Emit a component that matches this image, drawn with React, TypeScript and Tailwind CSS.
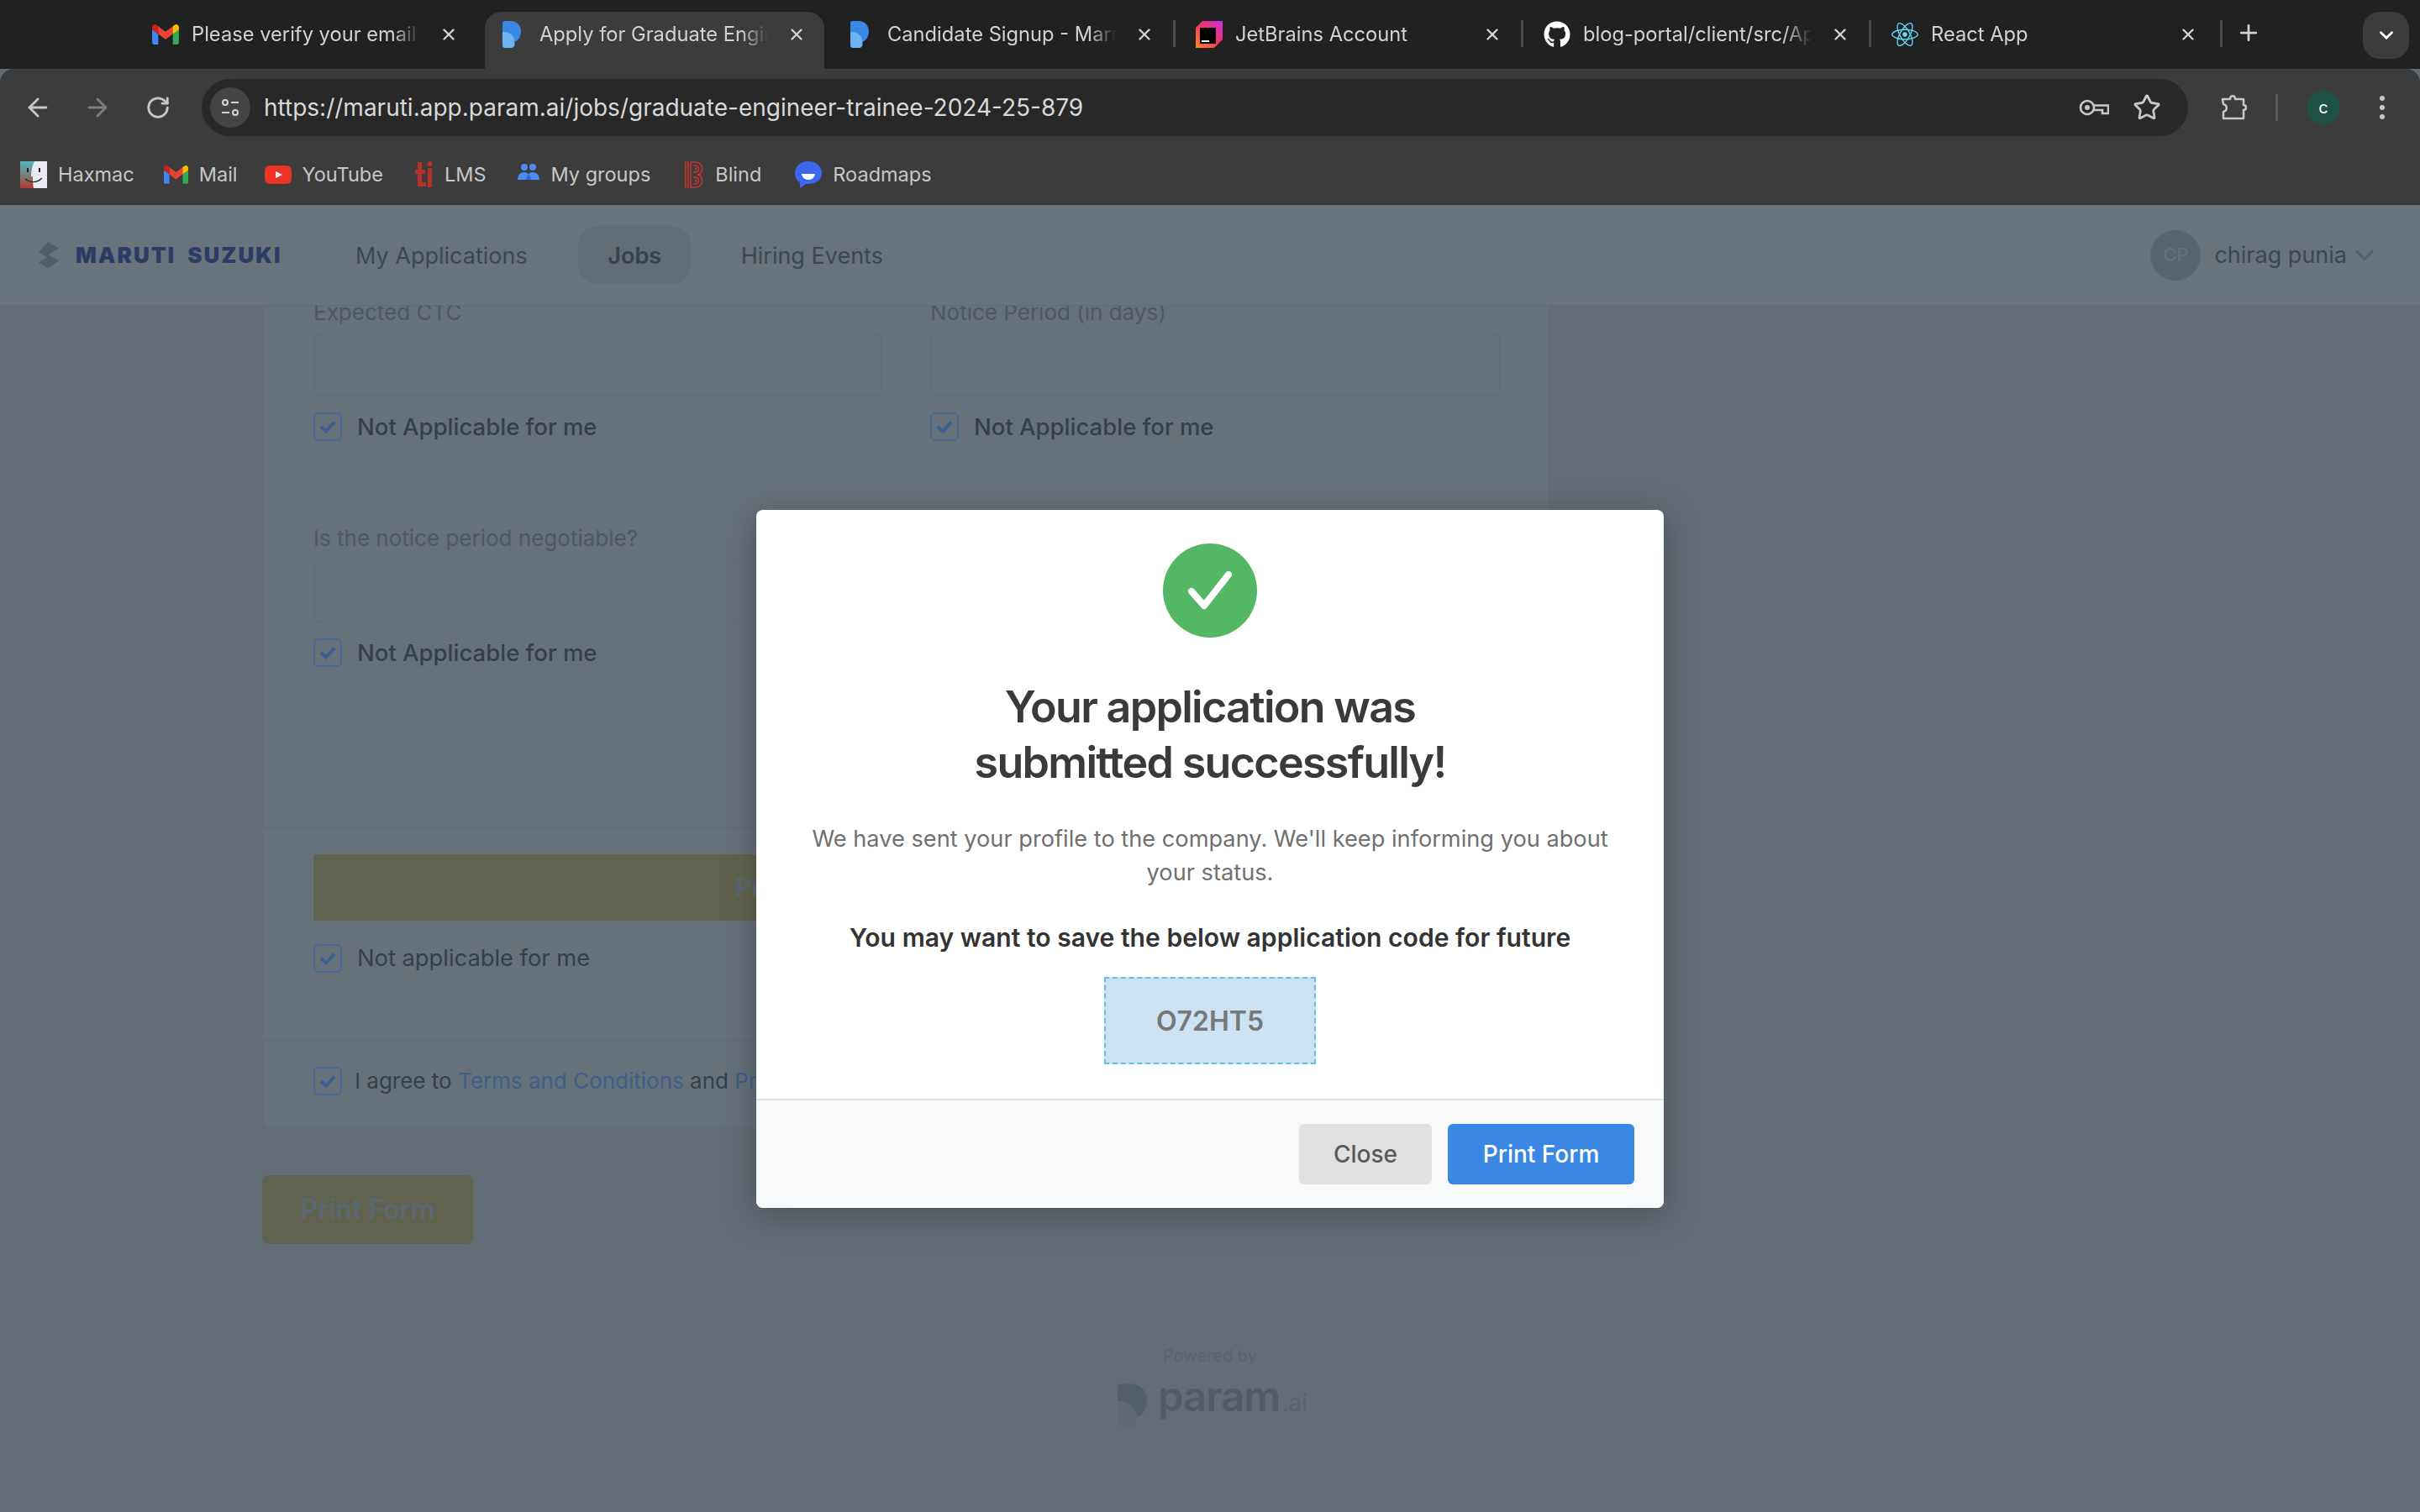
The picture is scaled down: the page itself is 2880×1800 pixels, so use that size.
import React from "react";
import { ArrowLeft, ArrowRight, ChevronDown, Plus, RotateCw, Star, X } from "lucide-react";
import { FaGithub, FaReact } from "react-icons/fa";

const GmailIcon = ({ className }: { className?: string }) => (
  <svg viewBox="0 0 256 193" className={className}>
    <path fill="#4285F4" d="M58.182 192.05V93.14L27.507 65.077 0 49.504v125.091c0 9.658 7.825 17.455 17.455 17.455h40.727Z" />
    <path fill="#34A853" d="M197.818 192.05h40.727c9.659 0 17.455-7.826 17.455-17.455V49.505l-31.156 17.837-27.026 25.798v98.91Z" />
    <path fill="#EA4335" d="m58.182 93.14-4.174-38.647 4.174-36.989L128 69.868l69.818-52.364 4.669 34.992-4.669 40.644L128 145.504z" />
    <path fill="#FBBC04" d="M197.818 17.504V93.14L256 49.504V26.231c0-21.585-24.64-33.89-41.89-20.945l-16.292 12.218Z" />
    <path fill="#C5221F" d="m0 49.504 26.759 20.07L58.182 93.14V17.504L41.89 5.286C24.61-7.66 0 4.646 0 26.23v23.273Z" />
  </svg>
);

const ParamIcon = ({ className, dark, light }: { className?: string; dark: string; light: string }) => (
  <svg viewBox="0 0 35 51" className={className}>
    <path fill={dark} d="M4 0H16C27 0 35 8 35 20C35 31 28 40 20 40H0V4C0 2 2 0 4 0Z" />
    <path fill={light} d="M0 21C12 19 23 28 23 40V45C23 48 20 51 17 51H4C2 51 0 49 0 47Z" />
  </svg>
);

const JetBrainsIcon = () => (
  <svg viewBox="0 0 32 32" className="h-8 w-8 shrink-0">
    <defs>
      <linearGradient id="jb" x1="0" y1="1" x2="1" y2="0">
        <stop offset="0" stopColor="#ff8a1f" />
        <stop offset="0.5" stopColor="#f2345f" />
        <stop offset="1" stopColor="#c92ee8" />
      </linearGradient>
    </defs>
    <path fill="url(#jb)" d="M8 0H32V22L22 32H0V8Z" />
    <rect x="5" y="8" width="19" height="19" fill="#000" />
    <rect x="7" y="23" width="9" height="2" fill="#fff" />
  </svg>
);

const TuneIcon = () => (
  <svg viewBox="0 0 24 24" className="h-6 w-6" fill="none" stroke="#d4d4d4" strokeWidth="2">
    <circle cx="6" cy="6" r="3" />
    <path d="M13 6h9" />
    <circle cx="18" cy="18" r="3" />
    <path d="M2 18h9" />
  </svg>
);

const KeyIcon = () => (
  <svg viewBox="0 0 36 20" className="h-5 w-9" fill="none" stroke="#c7c7c7" strokeWidth="2.6">
    <circle cx="10" cy="10" r="8" />
    <circle cx="10" cy="10" r="3" fill="#c7c7c7" stroke="none" />
    <path d="M18 7.5H35V17H28V13H25V13H18" />
  </svg>
);

const ExtensionIcon = () => (
  <svg viewBox="0 0 32 32" className="h-8 w-8" fill="none" stroke="#c7c7c7" strokeWidth="2.6" strokeLinejoin="round">
    <path d="M3 6H12C12 1 18 1 18 6H28V13C32 13 32 19 28 19V29H4V21C9 20 9 13 4 12Z" />
  </svg>
);

const tabs = [
  { title: "Please verify your email", icon: <GmailIcon className="h-6 w-8 shrink-0" /> },
  { title: "Apply for Graduate Engineer", active: true, icon: <ParamIcon dark="#3b87e4" light="#6db4f2" className="ml-[3px] mr-[7px] h-8 w-[22px] shrink-0" /> },
  { title: "Candidate Signup - Maruti", icon: <ParamIcon dark="#3b87e4" light="#6db4f2" className="ml-[3px] mr-[7px] h-8 w-[22px] shrink-0" /> },
  { title: "JetBrains Account", icon: <JetBrainsIcon /> },
  { title: "blog-portal/client/src/App.tsx", icon: <FaGithub className="h-8 w-8 shrink-0 text-white" /> },
  { title: "React App", icon: <FaReact className="h-8 w-8 shrink-0 text-[#61dafb]" /> },
];

const bookmarks = [
  {
    label: "Haxmac",
    offset: "",
    icon: (
      <svg viewBox="0 0 32 32" className="h-8 w-8">
        <defs>
          <linearGradient id="finder" x1="0" y1="0" x2="0" y2="1">
            <stop offset="0" stopColor="#55b5c2" />
            <stop offset="0.55" stopColor="#7c7a70" />
            <stop offset="1" stopColor="#b23a30" />
          </linearGradient>
        </defs>
        <rect width="32" height="32" fill="#e9edf2" />
        <path fill="url(#finder)" d="M0 0H17C14 6 13 12 13 18H15C15 23 15 27 16 32H0Z" />
        <path d="M6 21C12 26 20 26 26 20" fill="none" stroke="#2a2a2a" strokeWidth="1.4" />
        <rect x="8" y="8" width="2" height="5" fill="#222" />
        <rect x="22" y="8" width="2" height="5" fill="#222" />
      </svg>
    ),
  },
  { label: "Mail", offset: "", icon: <GmailIcon className="h-[22px] w-[29px]" /> },
  {
    label: "YouTube",
    offset: "-ml-[3px]",
    icon: (
      <svg viewBox="0 0 32 22" className="h-[22px] w-8">
        <rect width="32" height="22" rx="6" fill="#ee3424" />
        <path d="M13 7L21 11L13 15Z" fill="#fff" />
      </svg>
    ),
  },
  {
    label: "LMS",
    offset: "ml-[3px]",
    icon: (
      <svg viewBox="0 0 22 32" className="h-8 w-[22px]" fill="#b8302c">
        <rect x="3" y="1" width="5" height="28" />
        <rect x="0" y="10" width="12" height="5" />
        <rect x="3" y="25" width="10" height="5" />
        <rect x="15" y="8" width="5" height="23" />
        <circle cx="17.5" cy="3" r="3" />
      </svg>
    ),
  },
  {
    label: "My groups",
    offset: "ml-[3px]",
    icon: (
      <svg viewBox="0 0 26 26" className="h-[26px] w-[26px]">
        <circle cx="8" cy="4" r="4" fill="#4c8bf5" />
        <circle cx="18" cy="4" r="4" fill="#4c8bf5" />
        <path d="M0 26V19C0 13 4 10 8 10C12 10 13 13 13 13C13 13 14 10 18 10C22 10 26 13 26 19H0Z" fill="#4c8bf5" />
        <path d="M13 13C15 15 16 17 16 19H10C10 17 11 15 13 13Z" fill="#2f66c4" />
      </svg>
    ),
  },
  {
    label: "Blind",
    offset: "ml-[6px]",
    icon: (
      <svg viewBox="0 0 23 32" className="h-8 w-[23px]" fill="none" stroke="#c6352d" strokeWidth="1.6">
        <path d="M1 0V32M4 0V32M7 1H12C23 1 23 15 15 16C23 17 23 31 12 31H7V1" />
        <path d="M10 5H12C18 5 18 13 12 13H10M10 19H12C18 19 18 27 12 27H10" />
        <path d="M12 8C14 8 14 10 12 10M12 22C14 22 14 24 12 24" />
      </svg>
    ),
  },
  {
    label: "Roadmaps",
    offset: "ml-[5px]",
    icon: (
      <svg viewBox="0 0 32 32" className="h-8 w-8">
        <path d="M16 0C25 0 32 6 32 14C32 22 25 27 16 27C15 27 14 27 13 27L6 32L6 25C2 23 0 19 0 14C0 6 7 0 16 0Z" fill="#3c68ee" />
        <path d="M8 15H24C23 20 20 22 16 22C12 22 9 20 8 15Z" fill="#fff" />
      </svg>
    ),
  },
];

const CheckBox = () => (
  <span className="flex h-[34px] w-[34px] shrink-0 items-center justify-center rounded-[6px] border-2 border-[#47699a]">
    <svg viewBox="0 0 20 20" className="h-5 w-5" fill="none" stroke="#3a6090" strokeWidth="4">
      <path d="M2 10L8 15.5L18 4.5" />
    </svg>
  </span>
);

const CheckRow = ({ label, className }: { label: string; className?: string }) => (
  <div className={`flex items-center gap-[18px] ${className ?? ""}`}>
    <CheckBox />
    <span className="text-[27.5px] leading-[34px] font-medium text-[#343f4a]">{label}</span>
  </div>
);

const Field = ({ label, width }: { label: string; width?: string }) => (
  <div className={width}>
    <div className="h-[30px] text-[26px] leading-[30px] text-[#4e5863]">{label}</div>
    <div className="mt-[10px] h-[75px] rounded-[6px] border-2 border-[#646e77]" />
  </div>
);

const App = () => {
  return (
    <div className="relative flex h-[1800px] w-[2880px] flex-col overflow-hidden bg-[#646d76] font-['Inter',sans-serif]">
      {/* browser chrome */}
      <div className="flex h-[82px] shrink-0 gap-[10px] bg-[#202222] pl-[163px]">
        {tabs.map((tab) => (
          <div
            key={tab.title}
            className={`relative mt-[14px] flex h-[68px] w-[404px] shrink-0 items-center rounded-t-[20px] pb-[14px] pl-[18px] ${tab.active ? "bg-[#3c3c3c]" : ""}`}
          >
            {tab.icon}
            <span className="ml-[15px] w-[272px] overflow-hidden whitespace-nowrap text-[23.7px] leading-[32px] text-[#d2d2d2] [mask-image:linear-gradient(to_right,black_88%,transparent)]">
              {tab.title}
            </span>
            <X className="ml-[23px] h-[22px] w-[22px] shrink-0 text-[#d2d2d2]" strokeWidth={2.6} />
            {!tab.active && tab.title !== "Please verify your email" && tab.title !== "Candidate Signup - Maruti" && (
              <span className="absolute left-[-9px] top-[10px] h-[32px] w-[3px] bg-[#4a4a4a]" />
            )}
          </div>
        ))}
        <span className="-ml-[5px] mt-[24px] h-[32px] w-[3px] bg-[#4a4a4a]" />
        <Plus className="ml-[6px] mt-[24px] h-[30px] w-[30px] text-[#d2d2d2]" strokeWidth={2.2} />
        <div className="ml-[111px] mt-[14px] flex h-[56px] w-[55px] items-center justify-center rounded-[20px] bg-[#3c3c3c]">
          <ChevronDown className="h-[26px] w-[26px] text-white" strokeWidth={2.6} />
        </div>
      </div>
      <div className="flex h-[80px] shrink-0 items-start rounded-t-[16px] bg-[#3c3c3c] pt-[12px]">
        <div className="flex h-[68px] w-[240px] items-center pl-[28px]">
          <ArrowLeft className="h-[34px] w-[34px] text-[#c7c7c7]" strokeWidth={2} />
          <ArrowRight className="ml-[37px] h-[34px] w-[34px] text-[#7d7d7d]" strokeWidth={2} />
          <RotateCw className="ml-[40px] h-[30px] w-[30px] text-[#c7c7c7]" strokeWidth={2.2} />
        </div>
        <div className="flex h-[68px] w-[2364px] items-center rounded-full bg-[#282828] pl-[10px] pr-[32px]">
          <div className="flex h-[48px] w-[48px] items-center justify-center rounded-full bg-[#444444]">
            <TuneIcon />
          </div>
          <span className="ml-[16px] flex-1 text-[28px] leading-[36px] text-[#d9d9d9]">
            https://maruti.app.param.ai/jobs/graduate-engineer-trainee-2024-25-879
          </span>
          <KeyIcon />
          <Star className="ml-[28px] h-[34px] w-[34px] text-[#c7c7c7]" strokeWidth={2} />
        </div>
        <div className="flex h-[68px] flex-1 items-center pl-[38px]">
          <ExtensionIcon />
          <span className="ml-[34px] h-[32px] w-[3px] bg-[#5c5c5c]" />
          <span className="ml-[34px] flex h-[40px] w-[40px] items-center justify-center rounded-full bg-[#1f5145] text-[20px] text-white">
            c
          </span>
          <div className="ml-[47px] flex flex-col gap-[5px]">
            <span className="h-[6px] w-[6px] rounded-full bg-[#c7c7c7]" />
            <span className="h-[6px] w-[6px] rounded-full bg-[#c7c7c7]" />
            <span className="h-[6px] w-[6px] rounded-full bg-[#c7c7c7]" />
          </div>
        </div>
      </div>
      <div className="flex h-[82px] shrink-0 items-start gap-[35px] border-b-2 border-[#333333] bg-[#3c3c3c] pl-[24px] pt-[12px]">
        {bookmarks.map((b) => (
          <div key={b.label} className={`flex h-[68px] items-center gap-[13px] ${b.offset}`}>
            {b.icon}
            <span className="text-[23.5px] leading-[32px] text-[#c7c7c7]">{b.label}</span>
          </div>
        ))}
      </div>

      {/* dimmed page */}
      <div className="relative flex min-h-0 flex-1 flex-col">
        <div className="relative z-10 flex h-[120px] shrink-0 items-center border-b border-[#626c74] bg-[#69737b] pl-[42px] pr-[48px]">
          <svg viewBox="0 0 33 34" className="h-[32px] w-[33px]" fill="#535d66">
            <path d="M15 0L29 8L15 16L29 24L15 33L3 26L14 19L3 13Z" />
          </svg>
          <span className="ml-[15px] w-[246px] whitespace-nowrap text-[26px] font-black tracking-[2px] text-[#2d3c66] [word-spacing:7px]">
            MARUTI SUZUKI
          </span>
          <span className="ml-[87px] pt-[3px] text-[27px] text-[#3c4752]">My Applications</span>
          <span className="ml-[60px] flex h-[69px] w-[135px] items-center justify-center rounded-[24px] bg-[#636d75] pt-[3px] text-[27px] font-semibold text-[#36414c]">
            Jobs
          </span>
          <span className="ml-[59px] pt-[3px] text-[27px] text-[#3c4752]">Hiring Events</span>
          <div className="ml-auto flex items-center">
            <span className="flex h-[60px] w-[60px] items-center justify-center rounded-full bg-[#5a646d] text-[22px] font-medium text-[#67717a]">
              CP
            </span>
            <span className="ml-[16px] pt-[2px] text-[27px] text-[#3c4752]">chirag punia</span>
            <ChevronDown className="ml-[3px] h-[36px] w-[36px] text-[#56606a]" strokeWidth={2} />
          </div>
        </div>

        <div className="ml-[312px] w-[1532px] -mt-[7px]">
          <div className="rounded-b-[8px] border-x border-b border-[#626c75] bg-[#67717a]">
            <div className="h-[630px] border-b-2 border-[#636d76] pl-[60px] pr-[55px]">
              <div className="flex gap-[57px]">
                <Field label="Expected CTC" width="w-[677px]" />
                <Field label="Notice Period (in days)" width="w-[679px]" />
              </div>
              <div className="mt-[19px] flex gap-[57px]">
                <CheckRow label="Not Applicable for me" className="w-[677px]" />
                <CheckRow label="Not Applicable for me" />
              </div>
              <Field label="Is the notice period negotiable?" width="mt-[101px] w-[677px]" />
              <CheckRow label="Not Applicable for me" className="mt-[19px]" />
            </div>
            <div className="h-[252px] border-b-2 border-[#636d76] pl-[60px] pr-[55px] pt-[30px]">
              <div className="flex h-[79px] items-center bg-[#62634f] pl-[502px] text-[30px] font-semibold text-[#5c6975]">
                Print Form
              </div>
              <div className="mt-[28px] flex items-center gap-[18px]">
                <CheckBox />
                <span className="text-[27.3px] leading-[34px] text-[#343f4a]">Not applicable for me</span>
              </div>
            </div>
            <div className="flex h-[103px] items-start gap-[15px] pl-[60px] pr-[55px] pt-[31px]">
              <CheckBox />
              <span className="text-[26px] leading-[34px] text-[#343f4a]">
                I agree to <span className="text-[#3d5f8b]">Terms and Conditions</span> and{" "}
                <span className="text-[#3d5f8b]">Privacy Policy</span>
              </span>
            </div>
          </div>
          <button className="mt-[56px] flex h-[82px] w-[251px] items-center justify-center rounded-[8px] bg-[#62634f] text-[32px] font-semibold text-[#5c6975]">
            Print Form
          </button>
        </div>

        <div className="mt-[121px] flex flex-col items-center">
          <span className="text-[20px] leading-[24px] text-[#5a636d]">Powered by</span>
          <div className="mt-[21px] flex items-start pl-[6px]">
            <ParamIcon dark="#555f69" light="#606a73" className="h-[52px] w-[35px]" />
            <span className="ml-[13px] -mt-[10px] text-[49px] leading-[52px] font-semibold tracking-[-1px] text-[#525c66]">param</span>
            <span className="ml-[2px] mt-[3px] text-[28px] leading-[40px] text-[#59636d]">.ai</span>
          </div>
        </div>

        {/* success modal */}
        <div className="absolute inset-0 z-20 flex justify-center pt-[363px]">
          <div className="flex h-[831px] w-[1080px] flex-col overflow-hidden rounded-[8px] bg-white shadow-[0_8px_40px_rgba(20,25,30,0.35)]">
            <div className="flex flex-1 flex-col items-center pt-[40px]">
              <div className="flex h-[112px] w-[112px] items-center justify-center rounded-full bg-[#54b765]">
                <svg viewBox="0 0 56 56" className="h-[56px] w-[56px]" fill="none" stroke="#fff" strokeWidth="8" strokeLinecap="round" strokeLinejoin="round">
                  <path d="M6 29L21 46L50 9" />
                </svg>
              </div>
              <h1 className="mt-[50px] text-center text-[52px] leading-[66px] font-semibold tracking-[-1.7px] text-[#3a3a3a]">
                Your application was
                <br />
                submitted successfully!
              </h1>
              <p className="mt-[38px] w-[1000px] text-center text-[27.2px] leading-[40px] text-[#707070]">
                We have sent your profile to the company. We'll keep informing you about your status.
              </p>
              <p className="mt-[37px] text-[30.1px] leading-[40px] font-semibold text-[#333333]">
                You may want to save the below application code for future
              </p>
              <div className="mt-[27px] flex h-[104px] w-[252px] items-center justify-center border-2 border-dashed border-[#5fc2ee] bg-[#cde2f2] pt-[2px] text-[32px] font-semibold text-[#777777]">
                O72HT5
              </div>
            </div>
            <div className="flex h-[130px] shrink-0 items-start justify-end gap-[19px] border-t-2 border-[#dfe1e4] bg-[#f8f9fb] pr-[35px] pt-[28px]">
              <button className="h-[72px] w-[158px] rounded-[6px] bg-[#e0e1e3] text-[28px] font-medium text-[#5a5a5a]">
                Close
              </button>
              <button className="h-[72px] w-[222px] rounded-[6px] bg-[#3b87e4] text-[28px] font-medium text-white">
                Print Form
              </button>
            </div>
          </div>
        </div>
      </div>
    </div>
  );
};

export default App;
